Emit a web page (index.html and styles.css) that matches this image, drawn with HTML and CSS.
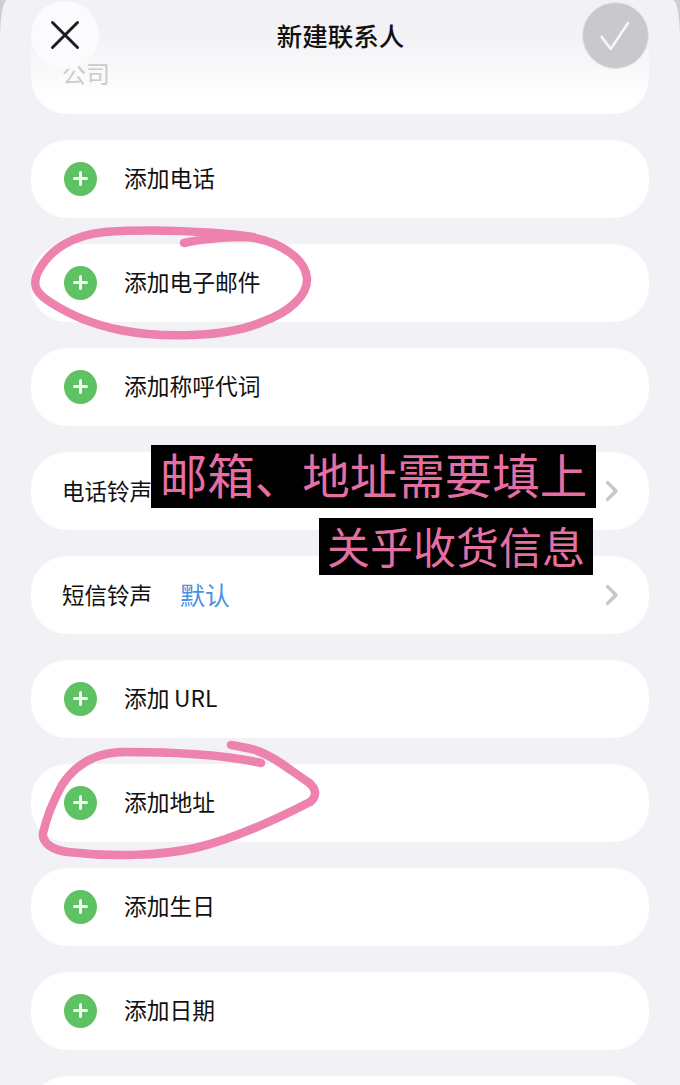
FILE: index.html
```html
<!DOCTYPE html>
<html lang="zh-CN">
<head>
  <meta charset="utf-8">
  <title>新建联系人</title>
  <link rel="stylesheet" href="styles.css">
</head>
<body>
  <div class="sheet">
    <div class="card card--company"><span class="company-label">公司</span></div>

    <ul class="rows">
      <li class="row"><span class="plus"></span><span class="row__label">添加电话</span></li>
      <li class="row"><span class="plus"></span><span class="row__label">添加电子邮件</span></li>
      <li class="row"><span class="plus"></span><span class="row__label">添加称呼代词</span></li>
      <li class="row row--tone">
        <span class="row__name">电话铃声</span>
        <svg class="chevron" viewBox="0 0 14 22"><path d="M2.500 2.500 11 11l-8.500 8.500"/></svg>
      </li>
      <li class="row row--tone">
        <span class="row__name">短信铃声</span><span class="row__value">默认</span>
        <svg class="chevron" viewBox="0 0 14 22"><path d="M2.500 2.500 11 11l-8.500 8.500"/></svg>
      </li>
      <li class="row"><span class="plus"></span><span class="row__label">添加&#8201;URL</span></li>
      <li class="row"><span class="plus"></span><span class="row__label">添加地址</span></li>
      <li class="row"><span class="plus"></span><span class="row__label">添加生日</span></li>
      <li class="row"><span class="plus"></span><span class="row__label">添加日期</span></li>
      <li class="row"></li>
    </ul>

    <header class="topbar">
      <button class="round round--close">
        <svg viewBox="0 0 32 32"><path d="M3.500 3.500 28.500 28.500M28.500 3.500 3.500 28.500"/></svg>
      </button>
      <h1 class="topbar__title">新建联系人</h1>
      <button class="round round--done">
        <svg viewBox="0 0 32 32"><path d="M2.600 17.700 11.700 30 29 4"/></svg>
      </button>
    </header>
  </div>

  <!-- pink marker scribbles -->
  <svg class="scribble" viewBox="0 0 680 1085">
    <path d="M184 243C205 238 235 237 253 237C215 231 150 229 105 232C72 235 50 250 39 270C31 285 36 293 50 302C70 315 95 325 120 330C160 338 225 338 262 322C290 312 308 295 307 278C305 258 280 243 255 238C245 236 235 235 225 235"/>
    <path d="M261 763C225 755 180 752 125 752C95 752 75 765 62 785C52 803 46 820 43 833C42 843 52 850 68 852C110 857 160 856 195 848C230 840 275 820 310 802C318 796 316 788 308 782C290 770 272 755 255 750C247 748 238 746 231 745"/>
  </svg>

  <div class="caption caption--one">邮箱、地址需要填上</div>
  <div class="caption caption--two">关乎收货信息</div>
</body>
</html>
```

FILE: styles.css
```css
* {
  box-sizing: border-box;
}

html,
body {
  margin: 0;
  height: 100%;
}

body {
  width: 680px;
  height: 1085px;
  position: relative;
  overflow: hidden;
  font-family: "Noto Sans CJK SC", "Liberation Sans", sans-serif;
  color: #111;
  background-color: #cfcfd1;
}

.sheet {
  height: 1085px;
  padding: 0 31px;
  background-color: #f1f1f6;
  border-radius: 7px 7px 0 0 / 40px 40px 0 0;
  overflow: hidden;
  position: relative;
}

.card--company {
  height: 114px;
  margin-bottom: 26px;
  display: flex;
  align-items: flex-end;
  padding: 0 0 25px 31px;
  background: linear-gradient(#f1f1f6 25px, #f8f8fa 65px, #fff 98px);
  border-radius: 0 0 36px 36px;
}

.company-label {
  font-size: 24px;
  line-height: 32px;
  color: #cbcbce;
}

.rows {
  list-style-type: none;
  margin: 0;
  padding: 0;
  display: flex;
  flex-direction: column;
  gap: 26px;
}

.row {
  height: 78px;
  flex: none;
  display: flex;
  align-items: center;
  padding: 0 32px 0 33px;
  background-color: #fff;
  border-radius: 36px;
  font-size: 22.750px;
  line-height: 30px;
}

.row--tone {
  padding-left: 31px;
}

.row__label {
  margin-left: 27px;
  padding-bottom: 3px;
}

.row__name {
  font-size: 22.500px;
  padding-bottom: 3px;
}

.row__value {
  margin-left: 28px;
  padding-bottom: 3px;
  font-size: 25px;
  color: #4a90e2;
}

.chevron {
  width: 14px;
  height: 22px;
  margin-left: auto;
  margin-right: -2px;
  fill: none;
  stroke: #c8c8cb;
  stroke-width: 3.400;
  stroke-linecap: round;
  stroke-linejoin: round;
}

.plus {
  width: 33px;
  height: 34px;
  flex: none;
  position: relative;
  border-radius: 50%;
  background-color: #5ec164;
  margin-top: -1px;
}

.plus::before,
.plus::after {
  content: "";
  position: absolute;
  left: 9px;
  top: 15.500px;
  width: 15px;
  height: 3px;
  border-radius: 2px;
  background-color: #f4fbf4;
}

.plus::after {
  transform: rotate(90deg);
}

/* bar sitting over the top of the list */
.topbar {
  position: absolute;
  top: 0;
  left: 0;
  right: 0;
  height: 70px;
  display: flex;
  align-items: center;
  justify-content: space-between;
  padding: 0 31px;
}

.topbar__title {
  margin: 0;
  font-size: 25.500px;
  font-weight: 500;
  line-height: 32px;
  color: #111;
}

.round {
  width: 68px;
  height: 68px;
  flex: none;
  padding: 0;
  border: 0;
  border-radius: 50%;
  display: flex;
  align-items: center;
  justify-content: center;
}

.round svg {
  width: 32px;
  height: 32px;
  fill: none;
  stroke-linecap: round;
  stroke-linejoin: round;
}

.round--close {
  background-color: #fbfbfd;
}

.round--close svg {
  stroke: #1c1c1e;
  stroke-width: 3;
}

.round--done {
  width: 67px;
  height: 67px;
  background-color: #c9c9cd;
  border: 1px solid #e4e4e8;
}

.round--done svg {
  stroke: #f7f7f9;
  stroke-width: 2.600;
}

.scribble {
  position: absolute;
  top: 0;
  left: 0;
  width: 680px;
  height: 1085px;
  fill: none;
  stroke: #ee82ae;
  stroke-width: 8.500;
  stroke-linecap: round;
  stroke-linejoin: round;
}

.caption {
  position: absolute;
  display: flex;
  align-items: center;
  justify-content: center;
  white-space: nowrap;
  background-color: #000;
  color: #e56fa3;
}

.caption--one {
  left: 151px;
  top: 445px;
  width: 445px;
  height: 63px;
  padding-bottom: 6px;
  font-size: 47.500px;
}

.caption--two {
  left: 319px;
  top: 518px;
  width: 274px;
  height: 57px;
  padding-bottom: 4px;
  font-size: 43px;
}
```
